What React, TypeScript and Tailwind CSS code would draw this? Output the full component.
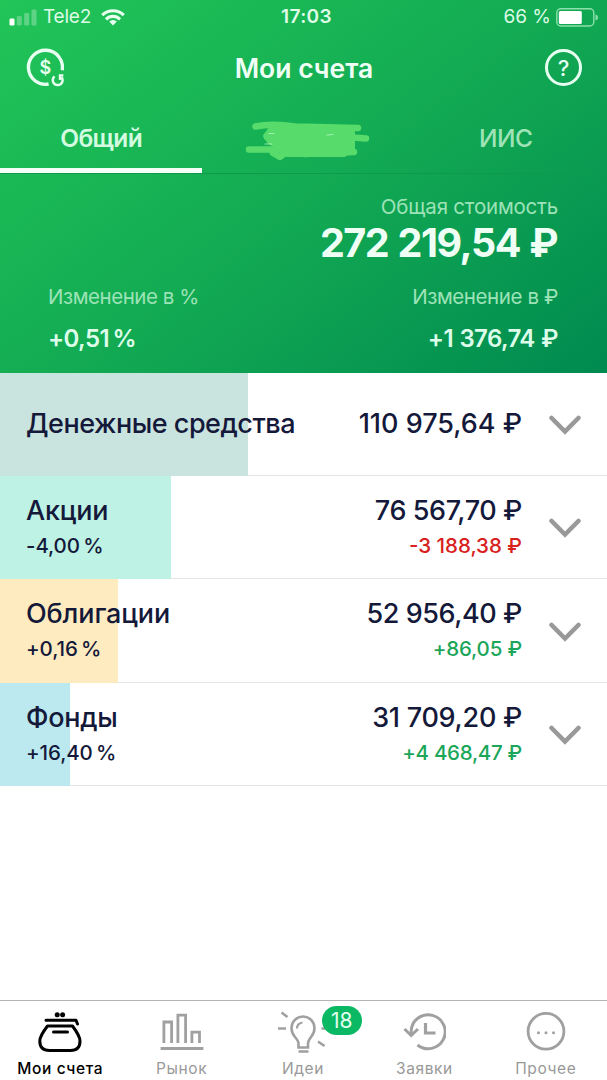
import React from 'react'

type Account = {
  name: string
  amount: string
  percent?: string
  change?: string
  changeColor?: string
  height: string
  bar: string
  nameTracking: string
  amountTracking: string
  changeTracking?: string
}

const accounts: Account[] = [
  {
    name: 'Денежные средства',
    amount: '110 975,64 ₽',
    height: 'h-[102.6px]',
    bar: 'w-[248px] bg-[#c9e3de]',
    nameTracking: 'tracking-[-0.48px]',
    amountTracking: 'tracking-[0px]'
  },
  {
    name: 'Акции',
    amount: '76 567,70 ₽',
    percent: '-4,00 %',
    change: '-3 188,38 ₽',
    changeColor: 'text-[#d8211c]',
    height: 'h-[103.6px]',
    bar: 'w-[171px] bg-[#bdf2e4]',
    nameTracking: 'tracking-[-0.2px]',
    amountTracking: 'tracking-[-0.4px]',
    changeTracking: 'tracking-[0px]'
  },
  {
    name: 'Облигации',
    amount: '52 956,40 ₽',
    percent: '+0,16 %',
    change: '+86,05 ₽',
    changeColor: 'text-[#1ba65a]',
    height: 'h-[103.6px]',
    bar: 'w-[118px] bg-[#feebbf]',
    nameTracking: 'tracking-[-0.12px]',
    amountTracking: 'tracking-[-0.42px]',
    changeTracking: 'tracking-[-0.15px]'
  },
  {
    name: 'Фонды',
    amount: '31 709,20 ₽',
    percent: '+16,40 %',
    change: '+4 468,47 ₽',
    changeColor: 'text-[#1ba65a]',
    height: 'h-[103.6px]',
    bar: 'w-[70px] bg-[#bbe9ef]',
    nameTracking: 'tracking-[-0.25px]',
    amountTracking: 'tracking-[-0.27px]',
    changeTracking: 'tracking-[-0.28px]'
  }
]

function StatusBar() {
  return (
    <div className="flex h-[34px] items-center text-[19px] leading-[34px]">
      <div className="flex flex-1 items-center pl-[9px]">
        <svg width="28" height="17" viewBox="0 0 28 17" fill="#fff">
          <rect x="0.5" y="9.5" width="5" height="7" rx="1.2" />
          <rect x="7.8" y="7" width="5" height="9.5" rx="1.2" opacity="0.28" />
          <rect x="15.2" y="4" width="5" height="12.5" rx="1.2" opacity="0.28" />
          <rect x="22.5" y="0.5" width="5" height="16" rx="1.2" opacity="0.28" />
        </svg>
        <span className="ml-[6px] tracking-[-0.2px] text-[#dcfbe6]">Tele2</span>
        <svg className="ml-[10px]" width="24" height="17" viewBox="0 0 24 17" fill="none" stroke="#e8fff0" strokeWidth="3.1">
          <path d="M1.2 6.2A15.2 15.2 0 0 1 22.8 6.2" />
          <path d="M5 10.3A9.8 9.8 0 0 1 19 10.3" />
          <path d="M12 16.5L8.2 12.6A5.4 5.4 0 0 1 15.8 12.6Z" fill="#e8fff0" stroke="none" />
        </svg>
      </div>
      <span className="pl-[5px] font-semibold tracking-[0.4px] text-[#e0fdea]">17:03</span>
      <div className="flex flex-1 items-center justify-end pr-[8px]">
        <span className="text-[#dcfbe6]">66 %</span>
        <svg className="ml-[5px]" width="43" height="19" viewBox="0 0 43 19">
          <rect x="0.8" y="0.8" width="37" height="17.2" rx="4" fill="none" stroke="#8ce0ab" strokeWidth="1.4" />
          <rect x="2.8" y="3" width="23" height="13" rx="1.5" fill="#fff" />
          <path d="M39.5 6.5Q42 7.2 42 9.5T39.5 12.5Z" fill="#8ce0ab" />
        </svg>
      </div>
    </div>
  )
}

function TitleBar() {
  return (
    <div className="flex h-[68px] items-center justify-between pr-[25px] pl-[26px]">
      <svg width="38" height="40" viewBox="0 0 38 40" fill="none" stroke="#e6fff0" strokeWidth="3.4">
        <path d="M36.2 22.2A17 17 0 1 0 22.6 36" />
        <path d="M28.6 28.4A4.9 4.9 0 1 0 35.4 29" strokeWidth="2.5" />
        <path d="M32.8 27.4H37.4M34 28V32" strokeWidth="2.4" />
        <text x="19.4" y="26" textAnchor="middle" fontSize="18" fontWeight="600" fill="#e6fff0" stroke="none">$</text>
      </svg>
      <h1 className="pt-px pr-[1px] text-[26.5px] font-semibold text-[#f0fff6]">Мои счета</h1>
      <div className="-mt-px flex size-[37px] items-center justify-center rounded-full border-3 border-[#e6fff0] text-[22px] font-medium leading-none text-[#e6fff0]">
        ?
      </div>
    </div>
  )
}

function Tabs() {
  return (
    <div className="grid h-[72px] grid-cols-3 border-b border-[#0f9a4b] text-center text-[24.5px] leading-[72px]">
      <div className="h-[71px] border-b-[5px] border-[#f4fff8] font-semibold tracking-[-0.6px] text-[#d3fbe0]">Общий</div>
      <div className="flex justify-center pt-[18px] pl-[9px]">
        <svg width="126" height="42" viewBox="0 0 126 42" fill="none" stroke="#57dc6c" strokeLinecap="round" strokeLinejoin="round">
          <path d="M26 8H90L108 11V29L99 35H42L34 28L24 22L20 16Z" fill="#57dc6c" strokeWidth="4" />
          <path d="M10.5 6.5Q26 3 50 6.5L113 8M22 17L60 14L121 18.5M4 29.5H40L60 34L109 32M28 33L35 37L39 34" strokeWidth="6.5" />
          <path d="M20 24H27M24 13.5H29M82 15L88 14.5" stroke="#b5f3bf" strokeWidth="0.8" />
        </svg>
      </div>
      <div className="font-medium tracking-[-0.5px] text-[#9fe3b7]">ИИС</div>
    </div>
  )
}

function Summary() {
  return (
    <div className="h-[199px] px-[49px] pt-[19px] text-[#9de3b8]">
      <div className="text-right text-[20.5px] leading-[28px] tracking-[-0.2px]">Общая стоимость</div>
      <div className="-mt-px pr-px text-right text-[39.5px] font-bold leading-[46px] tracking-[-1.5px] text-[#effff6] [word-spacing:1.5px]">272 219,54 ₽</div>
      <div className="mt-[17px] flex justify-between text-[20.5px] leading-[28px]">
        <span className="-ml-px tracking-[-0.45px]">Изменение в %</span>
        <span className="tracking-[-0.4px]">Изменение в ₽</span>
      </div>
      <div className="mt-[12px] flex justify-between text-[24px] font-semibold leading-[32px] text-[#dcfdea]">
        <span className="-ml-px tracking-[-0.6px] [word-spacing:-2px]">+0,51 %</span>
        <span className="tracking-[-0.6px] [word-spacing:1px]">+1 376,74 ₽</span>
      </div>
    </div>
  )
}

function AccountRow({ account }: { account: Account }) {
  return (
    <div className={`relative flex items-center border-b border-[#e4e4e6] pt-[1.4px] pr-[26px] pl-[26px] whitespace-nowrap text-[#14193a] ${account.height}`}>
      <div className={`absolute top-0 -bottom-px left-0 ${account.bar}`} />
      <div className="relative flex-1">
        <div className={`text-[27px] font-medium leading-[36px] ${account.nameTracking}`}>{account.name}</div>
        {account.percent && (
          <div className="text-[20.5px] font-medium leading-[34px] tracking-[-0.1px] [word-spacing:-2px]">{account.percent}</div>
        )}
      </div>
      <div className="relative text-right">
        <div className={`text-[27px] font-medium leading-[36px] ${account.amountTracking}`}>{account.amount}</div>
        {account.change && (
          <div className={`text-[20.5px] font-medium leading-[34px] ${account.changeColor} ${account.changeTracking}`}>
            {account.change}
          </div>
        )}
      </div>
      <svg className="mt-px ml-[27px]" width="32" height="20" viewBox="0 0 32 20" fill="none" stroke="#999" strokeWidth="4.6" strokeLinecap="round">
        <path d="M2.6 3L16 16.5L29.4 3" />
      </svg>
    </div>
  )
}

function PurseIcon() {
  return (
    <svg width="44" height="42" viewBox="0 0 44 42" fill="none" stroke="#000" strokeWidth="3" strokeLinecap="round" strokeLinejoin="round">
      <circle cx="19.2" cy="3.7" r="2.5" fill="#000" stroke="none" />
      <circle cx="24.6" cy="3.7" r="2.5" fill="#000" stroke="none" />
      <path d="M8 9.2H38L39.5 13" />
      <path d="M9.5 15H34.5Q42 25 42 30Q42 39.5 32.5 39.5H11.5Q1.8 39.5 1.8 30Q1.8 25 9.5 15Z" />
      <path d="M15.5 21H29.5" />
    </svg>
  )
}

function ChartIcon() {
  return (
    <svg width="44" height="42" viewBox="0 0 44 42" fill="none" stroke="#a0a0a0" strokeWidth="2.8">
      <path d="M3.9 32V11H11.6V32M17.9 32V4.2H25.6V32M31.9 32V21.2H39.5V32M0.6 37.5H43.4" />
    </svg>
  )
}

function BulbIcon() {
  return (
    <svg width="50" height="44" viewBox="0 0 50 44" fill="none" stroke="#a0a0a0" strokeWidth="2.6">
      <path d="M20.5 36.5V32.5Q20.5 30 17 26Q13.5 22 13.5 17A11.5 11.5 0 0 1 36.5 17Q36.5 22 33 26Q30 30 30 32.5V36.5Z" />
      <path d="M19 17.5Q19 12.5 24.5 11.5" strokeWidth="2.2" />
      <path d="M20.5 40.5H30.5M0 17.500H8M3.5 1.5L9.5 6M40 30.5L46.5 35M43.5 17.5H49" />
    </svg>
  )
}

function HistoryIcon() {
  return (
    <svg width="44" height="42" viewBox="0 0 44 42" fill="none" stroke="#a0a0a0" strokeWidth="3">
      <path d="M9.2 25V20A17 17 0 1 1 15.5 34" />
      <path d="M2.5 18L9.2 24.5L16 18" />
      <path d="M23.5 12V22H33.5" strokeWidth="3.2" />
    </svg>
  )
}

function MoreIcon() {
  return (
    <svg width="42" height="42" viewBox="0 0 42 42" fill="#a0a0a0">
      <circle cx="21" cy="20.3" r="17.9" fill="none" stroke="#a0a0a0" strokeWidth="2.8" />
      <circle cx="13.5" cy="21.8" r="1.5" />
      <circle cx="21" cy="21.8" r="1.5" />
      <circle cx="28.5" cy="21.8" r="1.5" />
    </svg>
  )
}

const navItems = [
  { label: 'Мои счета', icon: <PurseIcon />, active: true },
  { label: 'Рынок', icon: <ChartIcon /> },
  { label: 'Идеи', icon: <BulbIcon />, badge: '18' },
  { label: 'Заявки', icon: <HistoryIcon /> },
  { label: 'Прочее', icon: <MoreIcon /> }
]

function BottomNav() {
  return (
    <nav className="grid h-[80px] grid-cols-5 border-t border-[#b4b4b4] bg-white">
      {navItems.map((item) => (
        <div key={item.label} className="relative flex flex-col items-center pt-[10px] pr-px">
          <div className="flex h-[45px] items-start justify-center">{item.icon}</div>
          {item.badge && (
            <span className="absolute top-[5px] left-[79px] flex h-[29px] w-[40px] items-center justify-center rounded-full bg-[#0bb864] text-[21px] text-[#e2ffef]">
              {item.badge}
            </span>
          )}
          <span
            className={`text-[15.5px] leading-[26px] whitespace-nowrap tracking-[0.6px] ${
              item.active ? 'font-medium text-black' : 'text-[#999]'
            }`}
          >
            {item.label}
          </span>
        </div>
      ))}
    </nav>
  )
}

export default function App() {
  return (
    <div className="flex h-[1080px] w-[607px] flex-col overflow-hidden bg-white font-[Inter,sans-serif]">
      <header className="h-[373px] bg-[linear-gradient(143deg,#22c558_0%,#13ab53_50%,#008a50_100%)]">
        <StatusBar />
        <TitleBar />
        <Tabs />
        <Summary />
      </header>
      <main className="flex-1">
        {accounts.map((account) => (
          <AccountRow key={account.name} account={account} />
        ))}
      </main>
      <BottomNav />
    </div>
  )
}
